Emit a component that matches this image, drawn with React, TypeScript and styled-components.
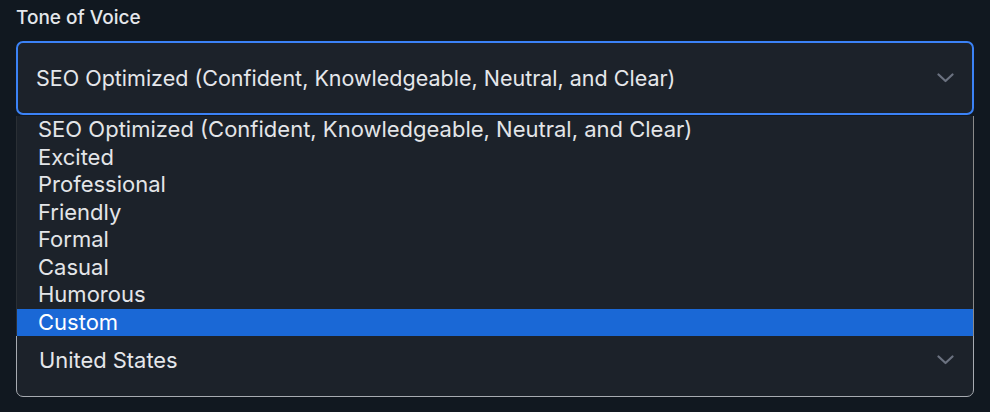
import React from 'react';
import styled, { createGlobalStyle } from 'styled-components';

const GlobalStyle = createGlobalStyle`
  html, body {
    margin: 0;
    padding: 0;
    background: #111820;
  }
  * {
    box-sizing: border-box;
  }
`;

const Page = styled.div`
  min-height: 100vh;
  padding: 6px 16px 0 16px;
  background: #111820;
  color: #e5e7eb;
  font-family: Inter, 'Noto Sans', sans-serif;
`;

// the country field sits under the open tone list, so only its box shows
const Form = styled.div`
  display: flex;
  flex-direction: column;
  gap: 208px;
`;

const Field = styled.div`
  display: flex;
  flex-direction: column;
  gap: 11px;
`;

const Label = styled.label`
  font-size: 19px;
  line-height: 24px;
  font-weight: 500;
  color: #e5e7eb;
`;

const SelectWrap = styled.div`
  position: relative;
`;

const SelectBox = styled.div<{ $open?: boolean }>`
  height: 74px;
  display: flex;
  align-items: center;
  justify-content: space-between;
  padding: 0 ${(p) => (p.$open ? '18px' : '19px')} 0 ${(p) => (p.$open ? '18px' : '22px')};
  background: #1c222a;
  border: ${(p) => (p.$open ? '2px solid #3b82f6' : '1px solid #a7abb1')};
  border-radius: 7px;
  font-size: ${(p) => (p.$open ? '21.5px' : '21.9px')};
  color: #e5e7eb;
`;

const Chevron = () => (
  <svg width="17" height="10" viewBox="0 0 17 10" fill="none">
    <polyline points="1.5,1.5 8.5,8 15.5,1.5" stroke="#6b7280" strokeWidth="2.2" strokeLinecap="round" strokeLinejoin="round" />
  </svg>
);

const Popup = styled.ul`
  position: absolute;
  top: calc(100% + 1px);
  left: 0;
  right: 0;
  margin: 0;
  padding: 0;
  list-style: none;
  background: #1c222a;
  border-left: 1px solid #2a2f35;
  border-right: 1px solid #8a8a8a;
  z-index: 10;
`;

const Option = styled.li<{ $selected?: boolean }>`
  height: 27.5px;
  line-height: 27.5px;
  padding-left: 21px;
  font-size: 22px;
  color: ${(p) => (p.$selected ? '#ffffff' : '#e3e5e8')};
  background: ${(p) => (p.$selected ? '#1a68d6' : 'transparent')};
  white-space: nowrap;
`;

const tones = [
  'SEO Optimized (Confident, Knowledgeable, Neutral, and Clear)',
  'Excited',
  'Professional',
  'Friendly',
  'Formal',
  'Casual',
  'Humorous',
  'Custom',
];

export default function App() {
  return (
    <Page>
      <GlobalStyle />
      <Form>
        <Field>
          <Label>Tone of Voice</Label>
          <SelectWrap>
            <SelectBox $open>
              <span>{tones[0]}</span>
              <Chevron />
            </SelectBox>
            <Popup>
              {tones.map((t) => (
                <Option key={t} $selected={t === 'Custom'}>
                  {t}
                </Option>
              ))}
            </Popup>
          </SelectWrap>
        </Field>
        <Field aria-label="Target Country">
          <SelectBox>
            <span>United States</span>
            <Chevron />
          </SelectBox>
        </Field>
      </Form>
    </Page>
  );
}
